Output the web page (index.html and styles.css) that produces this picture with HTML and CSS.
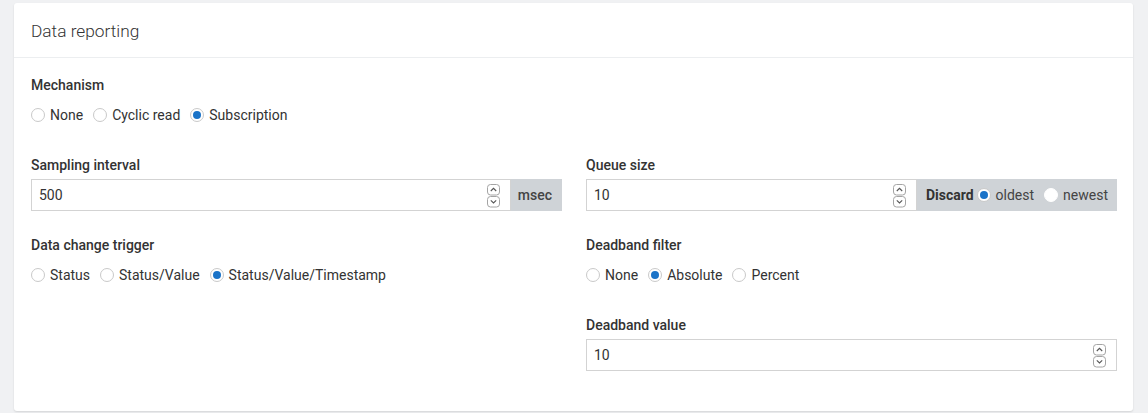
FILE: index.html
```html
<!DOCTYPE html>
<html>
<head>
<meta charset="utf-8">
<link rel="stylesheet" href="styles.css">
</head>
<body>
<div class="card">
  <div class="card-header">Data reporting</div>
  <div class="card-body">
    <div class="group">
      <div class="label">Mechanism</div>
      <div class="radios">
        <span class="radio"><span class="dot"></span>None</span>
        <span class="radio"><span class="dot"></span>Cyclic read</span>
        <span class="radio"><span class="dot on"></span>Subscription</span>
      </div>
    </div>
    <div class="grid">
      <div class="col">
        <div class="group">
          <div class="label">Sampling interval</div>
          <div class="input-group">
            <div class="input"><span class="val">500</span>
              <span class="spin"><svg width="13" height="24" viewBox="0 0 13 24"><rect x="0.5" y="0.5" width="12" height="10.5" rx="3" fill="#fff" stroke="#a4a4a4"/><path d="M3.8 7 L6.5 4.3 L9.2 7" fill="none" stroke="#555" stroke-width="1.1"/><rect x="0.5" y="12.5" width="12" height="10.5" rx="3" fill="#fff" stroke="#a4a4a4"/><path d="M3.8 16.3 L6.5 19 L9.2 16.3" fill="none" stroke="#555" stroke-width="1.1"/></svg></span>
            </div>
            <div class="addon">msec</div>
          </div>
        </div>
        <div class="group">
          <div class="label">Data change trigger</div>
          <div class="radios">
            <span class="radio"><span class="dot"></span>Status</span>
            <span class="radio"><span class="dot"></span>Status/Value</span>
            <span class="radio"><span class="dot on"></span>Status/Value/Timestamp</span>
          </div>
        </div>
      </div>
      <div class="col">
        <div class="group">
          <div class="label">Queue size</div>
          <div class="input-group">
            <div class="input"><span class="val">10</span>
              <span class="spin"><svg width="13" height="24" viewBox="0 0 13 24"><rect x="0.5" y="0.5" width="12" height="10.5" rx="3" fill="#fff" stroke="#a4a4a4"/><path d="M3.8 7 L6.5 4.3 L9.2 7" fill="none" stroke="#555" stroke-width="1.1"/><rect x="0.5" y="12.5" width="12" height="10.5" rx="3" fill="#fff" stroke="#a4a4a4"/><path d="M3.8 16.3 L6.5 19 L9.2 16.3" fill="none" stroke="#555" stroke-width="1.1"/></svg></span>
            </div>
            <div class="addon discard"><b>Discard</b>
              <span class="radio"><span class="dot on"></span>oldest</span>
              <span class="radio"><span class="dot white"></span>newest</span>
            </div>
          </div>
        </div>
        <div class="group">
          <div class="label">Deadband filter</div>
          <div class="radios">
            <span class="radio"><span class="dot"></span>None</span>
            <span class="radio"><span class="dot on"></span>Absolute</span>
            <span class="radio"><span class="dot"></span>Percent</span>
          </div>
        </div>
        <div class="group">
          <div class="label">Deadband value</div>
          <div class="input-group">
            <div class="input"><span class="val">10</span>
              <span class="spin"><svg width="13" height="24" viewBox="0 0 13 24"><rect x="0.5" y="0.5" width="12" height="10.5" rx="3" fill="#fff" stroke="#a4a4a4"/><path d="M3.8 7 L6.5 4.3 L9.2 7" fill="none" stroke="#555" stroke-width="1.1"/><rect x="0.5" y="12.5" width="12" height="10.5" rx="3" fill="#fff" stroke="#a4a4a4"/><path d="M3.8 16.3 L6.5 19 L9.2 16.3" fill="none" stroke="#555" stroke-width="1.1"/></svg></span>
            </div>
          </div>
        </div>
      </div>
    </div>
  </div>
</div>
</body>
</html>
```

FILE: styles.css
```css
html, body {
  margin: 0;
  padding: 0;
  background: #f0f1f3;
  font-family: Roboto, "Liberation Sans", sans-serif;
  color: #333;
}
body {
  padding: 3px 15px 0 14px;
  height: 413px;
  box-sizing: border-box;
}
.card {
  background: #fff;
  border-radius: 3px;
  box-shadow: 0 1px 2px rgba(0,0,0,0.12);
}
.card-header {
  height: 54px;
  line-height: 56px;
  padding-left: 17px;
  font-size: 17.3px;
  font-weight: 300;
  color: #333;
  border-bottom: 1px solid #eceef0;
}
.card-body {
  padding: 17px 16px 16px 17px;
}
.group {
  margin-bottom: 24px;
}
.label {
  font-size: 14px;
  font-weight: 500;
  line-height: 20px;
  color: #333;
}
.radios {
  display: flex;
  margin-top: 10px;
  height: 20px;
  padding-bottom: 6px;
}
.radio {
  display: inline-flex;
  align-items: center;
  font-size: 14px;
  line-height: 20px;
  margin-right: 10px;
  color: #333;
}
.dot {
  width: 14px;
  height: 14px;
  box-sizing: border-box;
  border: 1px solid #c9c9c9;
  border-radius: 50%;
  margin-right: 5px;
  background: #fff;
  position: relative;
}
.dot.on::after {
  content: "";
  position: absolute;
  left: 2px;
  top: 2px;
  width: 8px;
  height: 8px;
  border-radius: 50%;
  background: #1a73c8;
}
.dot.white {
  border-color: #fff;
}
.grid {
  display: grid;
  grid-template-columns: 1fr 1fr;
  column-gap: 24px;
}
.input-group {
  display: flex;
  margin-top: 4px;
  height: 32px;
}
.input {
  flex: 1;
  display: flex;
  align-items: center;
  justify-content: space-between;
  border: 1px solid #d3d3d3;
  box-sizing: border-box;
  padding: 0 10px 0 7px;
  font-size: 14px;
}
.spin {
  display: flex;
  padding-top: 1px;
}
.addon {
  display: flex;
  align-items: center;
  background: #cfd3d7;
  color: #444;
  font-size: 14px;
  font-weight: 500;
  padding: 0 10px 0 7px;
}
.discard {
  padding: 0 9px 0 9px;
}
.discard b {
  font-weight: 700;
  color: #333;
  margin-right: 3px;
}
.discard .radio {
  margin-right: 0;
  color: #444;
  font-weight: 400;
}
.discard .radio + .radio {
  margin-left: 10px;
}
```
